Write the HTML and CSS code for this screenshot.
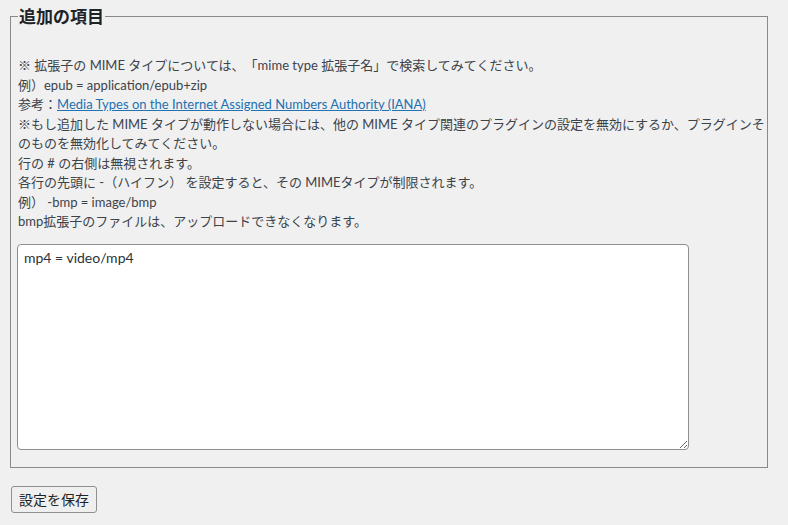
FILE: index.html
```html
<!DOCTYPE html>
<html lang="ja">
<head>
<meta charset="utf-8">
<title>追加の項目</title>
<link rel="stylesheet" href="styles.css">
</head>
<body>
<form class="page">
  <fieldset class="box">
    <legend class="box-title">追加の項目</legend>
    <div class="notes">
      <p>※ 拡張子の MIME タイプについては、「mime type 拡張子名」で検索してみてください。</p>
      <p>例）epub = application/epub+zip</p>
      <p>参考：<a href="#">Media Types on the Internet Assigned Numbers Authority (IANA)</a></p>
      <p>※もし追加した MIME タイプが動作しない場合には、他の MIME タイプ関連のプラグインの設定を無効にするか、プラグインそのものを無効化してみてください。</p>
      <p>行の # の右側は無視されます。</p>
      <p>各行の先頭に -（ハイフン） を設定すると、その MIMEタイプが制限されます。</p>
      <p>例） -bmp = image/bmp</p>
      <p>bmp拡張子のファイルは、アップロードできなくなります。</p>
    </div>
    <textarea class="mime-input">mp4 = video/mp4</textarea>
  </fieldset>
  <div class="actions">
    <button type="button" class="save-btn">設定を保存</button>
  </div>
</form>
</body>
</html>
```
FILE: styles.css
```css
html, body {
  margin: 0;
  padding: 0;
  background: #f0f0f0;
}
body {
  font-family: "Lato", "Noto Sans CJK JP", sans-serif;
  color: #3c434a;
  font-size: 13px;
  text-spacing-trim: space-all;
}
.page {
  padding: 5px 0 0 10px;
}
.box {
  width: 758px;
  box-sizing: border-box;
  margin: 0;
  border: 1px solid #8a8a8a;
  padding: 0 2px 17px 7px;
}
.box-title {
  font-family: "Noto Sans CJK JP", sans-serif;
  font-size: 17px;
  font-weight: bold;
  line-height: 22px;
  color: #1d2327;
  padding: 0 1px;
}
.notes {
  margin-top: 29px;
  line-height: 19.5px;
}
.notes p {
  margin: 0;
}
.notes a {
  color: #2271b1;
  text-decoration: underline;
}
.mime-input {
  display: block;
  box-sizing: border-box;
  width: 672px;
  height: 206px;
  margin: 12px 0 0 -1px;
  padding: 3px 6px;
  border: 1px solid #8c8f94;
  border-radius: 4px;
  background: #fff;
  font-family: "Lato", "Noto Sans CJK JP", sans-serif;
  font-size: 14px;
  line-height: 19px;
  color: #2c3338;
  resize: vertical;
}
.actions {
  padding-top: 18px;
}
.save-btn {
  box-sizing: border-box;
  width: 86px;
  height: 27px;
  margin-left: 1px;
  padding: 0;
  border: 1px solid #8f8f8f;
  border-radius: 3px;
  background: #efefef;
  font-family: "Noto Sans CJK JP", sans-serif;
  font-size: 14px;
  color: #1d2327;
}
```
